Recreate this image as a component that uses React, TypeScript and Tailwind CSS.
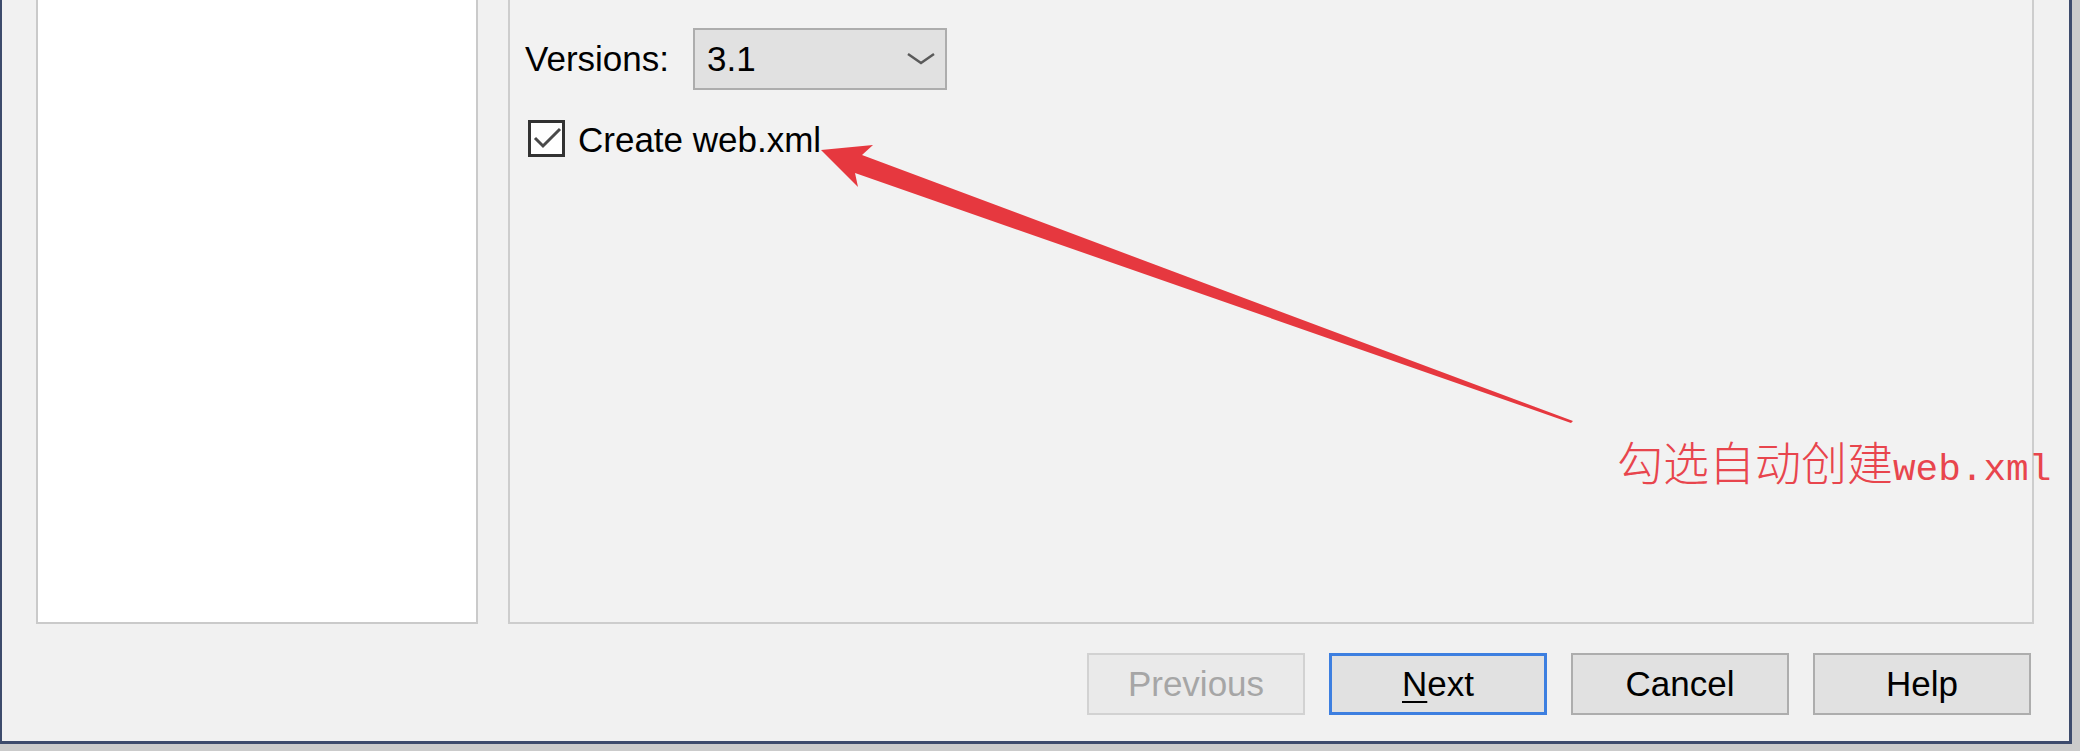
import { ReactNode } from "react";

type ButtonProps = {
  children: ReactNode;
  variant?: "default" | "disabled" | "focused";
};

function DialogButton({ children, variant = "default" }: ButtonProps) {
  const styles = {
    default: "border-2 border-[#adadad] bg-[#e1e1e1] text-black",
    disabled: "border-2 border-[#d2d2d2] bg-[#eaeaea] text-[#a6a6a6]",
    focused: "border-[3px] border-[#3d7fe0] bg-[#e1e1e1] text-black",
  }[variant];

  return (
    <div className={`flex h-[62px] w-[218px] items-center justify-center text-[35px] leading-[40px] ${styles}`}>
      {children}
    </div>
  );
}

function Chevron() {
  return (
    <svg width="28" height="14" viewBox="0 0 28 14" fill="none">
      <path d="M1 2 L14 11 L27 2" stroke="#5a5a5a" strokeWidth="2.5" />
    </svg>
  );
}

function CheckMark() {
  return (
    <svg width="31" height="31" viewBox="0 0 31 31" fill="none">
      <path d="M4 15 L12 23 L29 6" stroke="#4a4a4a" strokeWidth="3" />
    </svg>
  );
}

export default function App() {
  return (
    <div className="relative h-[751px] w-[2080px] overflow-hidden bg-[#cbcbcb] font-['Liberation_Sans',Arial,sans-serif]">
      <div className="flex h-[744px] w-[2072px] flex-col border-b-[3px] border-l-2 border-r-[3px] border-[#3d4b6c] bg-[#f1f1f1]">
        <div className="flex h-[624px] pl-[34px]">
          {/* left tree / list panel */}
          <div className="h-full w-[442px] border-2 border-t-0 border-[#cacaca] bg-white" />

          {/* right settings panel */}
          <div className="ml-[30px] h-full w-[1526px] border-2 border-t-0 border-[#cdcdcd] bg-[#f2f2f2] pl-[15px] pt-[28px] text-[35px] leading-[40px] text-black">
            <div className="flex items-center">
              <span className="w-[168px]">Versions:</span>
              <div className="flex h-[62px] w-[254px] items-center justify-between border-2 border-[#adadad] bg-[#e1e1e1] pl-[12px] pr-[10px]">
                <span>3.1</span>
                <Chevron />
              </div>
            </div>

            <div className="mt-[30px] flex items-start">
              <div className="ml-[3px] flex h-[37px] w-[37px] items-center justify-center border-[3px] border-[#333333] bg-white">
                <CheckMark />
              </div>
              <span className="ml-[13px]">Create web.xml</span>
            </div>
          </div>
        </div>

        <div className="mt-[29px] flex justify-end gap-[24px] pr-[38px]">
          <DialogButton variant="disabled">Previous</DialogButton>
          <DialogButton variant="focused">
            <span className="underline decoration-2 underline-offset-[5px]">N</span>ext
          </DialogButton>
          <DialogButton>Cancel</DialogButton>
          <DialogButton>Help</DialogButton>
        </div>
      </div>

      {/* red annotation arrow */}
      <svg className="pointer-events-none absolute inset-0" width="2080" height="751" viewBox="0 0 2080 751">
        <polygon
          points="821,150 873,145 862,155 1573,421 1571,423 855,173 858,187"
          fill="#e6383f"
        />
      </svg>

      <div className="absolute left-[1617px] top-[437px] whitespace-nowrap leading-none text-[#e8454d]">
        <span className="text-[46px] font-light font-['Noto_Sans_CJK_SC',sans-serif]">勾选自动创建</span>
        <span className="text-[37.7px] font-['Liberation_Mono',monospace]">web.xml</span>
      </div>
    </div>
  );
}
